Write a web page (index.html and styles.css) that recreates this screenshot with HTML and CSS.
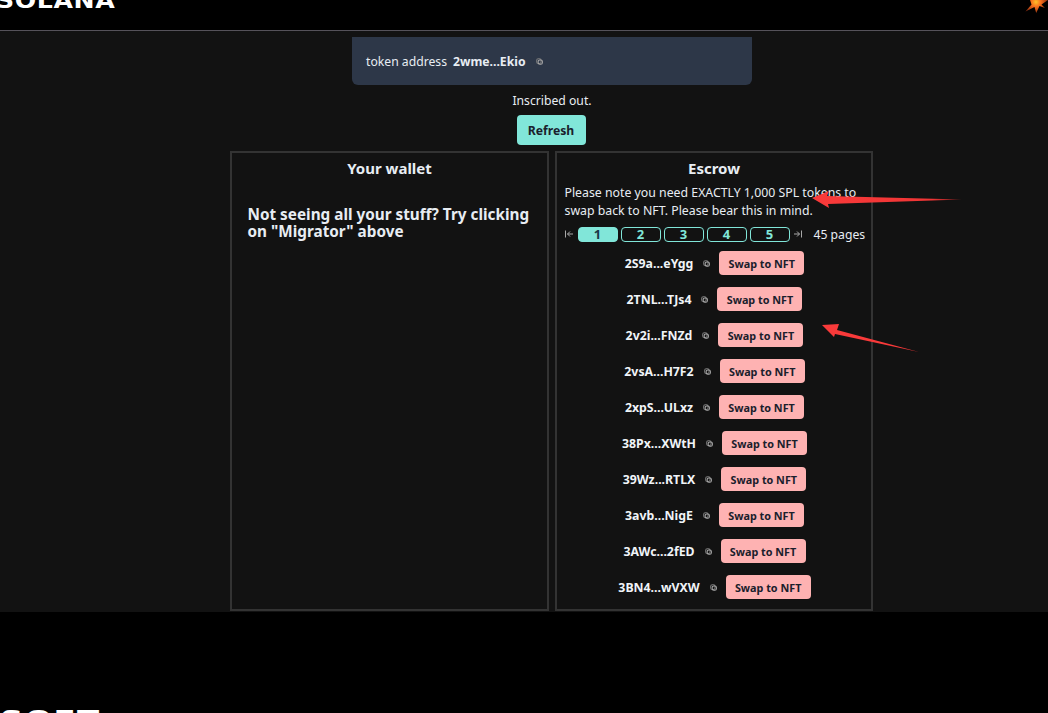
FILE: index.html
```html
<!DOCTYPE html>
<html lang="en">
<head>
  <meta charset="UTF-8" />
  <meta name="viewport" content="width=device-width, initial-scale=1.0" />
  <title>Inscriptions</title>
  <link rel="stylesheet" href="styles.css">
</head>
<body>
  <header class="topbar">
    <div class="logo">SOLANA</div>
    <svg class="spark" width="24" height="14" viewBox="0 0 24 14">
      <defs>
        <radialGradient id="sparkFill" gradientUnits="userSpaceOnUse" cx="12" cy="2" r="12">
          <stop offset="0" stop-color="#ffc02a" />
          <stop offset="0.4" stop-color="#f8701c" />
          <stop offset="1" stop-color="#8a2c10" />
        </radialGradient>
      </defs>
      <path fill="url(#sparkFill)" d="M6 0L18 0 24 0 17.500 4.500 21 8 15.500 6 12.200 13 10.500 7 1.500 11.500 7.500 4.500Z" />
    </svg>
  </header>

  <main class="page">
    <div class="token-card">
      <span>token address</span>
      <b class="addr">2wme...Ekio</b>
      <svg class="copy" viewBox="0 0 8 8"><use href="#copy-icon" /></svg>
    </div>
    <p class="status">Inscribed out.</p>
    <button class="refresh">Refresh</button>

    <div class="panels">
      <section class="panel">
        <h2>Your wallet</h2>
        <p class="hint">Not seeing all your stuff? Try clicking on "Migrator" above</p>
      </section>

      <section class="panel">
        <h2>Escrow</h2>
        <p class="note">Please note you need EXACTLY 1,000 SPL tokens to swap back to NFT. Please bear this in mind.</p>
        <div class="pager">
          <svg class="jump" viewBox="0 0 10 10"><path d="M1.500 1.500V8.500M9 5H3.500M6 2.500L3.500 5 6 7.500" /></svg>
          <button class="page-btn active">1</button>
          <button class="page-btn">2</button>
          <button class="page-btn">3</button>
          <button class="page-btn">4</button>
          <button class="page-btn">5</button>
          <svg class="jump" viewBox="0 0 10 10"><path d="M8.500 1.500V8.500M1 5H6.500M4 2.500L6.500 5 4 7.500" /></svg>
          <span class="pages">45 pages</span>
        </div>
        <ul class="rows">
          <li><b>2S9a...eYgg</b><svg class="copy" viewBox="0 0 8 8"><use href="#copy-icon" /></svg><button class="swap">Swap to NFT</button></li>
          <li><b>2TNL...TJs4</b><svg class="copy" viewBox="0 0 8 8"><use href="#copy-icon" /></svg><button class="swap">Swap to NFT</button></li>
          <li><b>2v2i...FNZd</b><svg class="copy" viewBox="0 0 8 8"><use href="#copy-icon" /></svg><button class="swap">Swap to NFT</button></li>
          <li><b>2vsA...H7F2</b><svg class="copy" viewBox="0 0 8 8"><use href="#copy-icon" /></svg><button class="swap">Swap to NFT</button></li>
          <li><b>2xpS...ULxz</b><svg class="copy" viewBox="0 0 8 8"><use href="#copy-icon" /></svg><button class="swap">Swap to NFT</button></li>
          <li><b>38Px...XWtH</b><svg class="copy" viewBox="0 0 8 8"><use href="#copy-icon" /></svg><button class="swap">Swap to NFT</button></li>
          <li><b>39Wz...RTLX</b><svg class="copy" viewBox="0 0 8 8"><use href="#copy-icon" /></svg><button class="swap">Swap to NFT</button></li>
          <li><b>3avb...NigE</b><svg class="copy" viewBox="0 0 8 8"><use href="#copy-icon" /></svg><button class="swap">Swap to NFT</button></li>
          <li><b>3AWc...2fED</b><svg class="copy" viewBox="0 0 8 8"><use href="#copy-icon" /></svg><button class="swap">Swap to NFT</button></li>
          <li><b>3BN4...wVXW</b><svg class="copy" viewBox="0 0 8 8"><use href="#copy-icon" /></svg><button class="swap">Swap to NFT</button></li>
        </ul>
      </section>
    </div>
  </main>

  <footer class="bottom">
    <div class="bottom-logo">SOFT</div>
  </footer>

  <!-- annotation arrows drawn over the screenshot -->
  <svg class="arrows" width="1048" height="713" viewBox="0 0 1048 713">
    <defs>
      <linearGradient id="fadeA" x1="812" y1="0" x2="962" y2="0" gradientUnits="userSpaceOnUse">
        <stop offset="0" stop-color="#f93a3a" />
        <stop offset="0.8" stop-color="#f03535" />
        <stop offset="1" stop-color="#701c1c" />
      </linearGradient>
    </defs>
    <path fill="url(#fadeA)" d="M812 198L829 191 827 196 962 199.500 828 204 829 208Z" />
    <path fill="#f93a3a" d="M822 325L839 324 837 330 919 352 835 334 834 337Z" />
  </svg>

  <svg class="defs" width="0" height="0">
    <symbol id="copy-icon" viewBox="0 0 8 8">
      <rect x="0.800" y="0.800" width="5" height="5.500" rx="1.800" fill="none" stroke="#7c7c7c" stroke-width="1.200" />
      <rect x="2.500" y="2.200" width="4.800" height="5" rx="1.800" fill="none" stroke="#a8a8a8" stroke-width="1.200" />
    </symbol>
  </svg>
</body>
</html>
```

FILE: styles.css
```css
* {
  box-sizing: border-box;
}

body {
  margin: 0;
  height: 713px;
  overflow: hidden;
  background: #000;
  color: #e8edf3;
  font-family: "Noto Sans", Arial, sans-serif;
  font-size: 12.200px;
}

button {
  font-family: inherit;
  cursor: pointer;
  border: none;
}

.topbar {
  height: 31px;
  background: #000;
  border-bottom: 1px solid #55525a;
  display: flex;
  justify-content: space-between;
  overflow: hidden;
}

.logo {
  margin-top: -9px;
  margin-left: -4px;
  height: 20px;
  font-family: "DejaVu Sans", sans-serif;
  font-size: 21px;
  line-height: 20px;
  font-weight: 700;
  letter-spacing: 0.5px;
  color: #fff;
  transform: scaleX(1.2);
  transform-origin: left;
}

.page {
  height: 581px;
  background: #121212;
  display: flex;
  flex-direction: column;
  align-items: center;
  padding: 6px 0 0 56px;
}

.token-card {
  width: 400px;
  height: 48px;
  background: #2d3748;
  border-radius: 0 0 6px 6px;
  display: flex;
  align-items: center;
  padding: 0 14px;
  gap: 6px;
}

.addr {
  font-weight: 700;
}

.token-card .copy {
  margin-left: 4px;
}

.copy {
  width: 7px;
  height: 7px;
  flex: none;
}

.status {
  margin: 7px 0 0;
  height: 18px;
  line-height: 18px;
  text-align: center;
}

.refresh {
  margin: 5px 2px 0 0;
  width: 69px;
  height: 30px;
  border-radius: 4px;
  background: #81e6d9;
  color: #1a202c;
  font-size: 12.200px;
  font-weight: 700;
}

.panels {
  margin: 6px 2px 0 0;
  display: flex;
  gap: 6px;
}

.panel {
  width: 319px;
  height: 460px;
  border: 2px solid #333;
  padding: 0 6px 0 7px;
  overflow: hidden;
}

.panel + .panel {
  width: 318px;
}

.panel h2 {
  margin: 5px 0 0;
  font-size: 15px;
  line-height: 20px;
  font-weight: 700;
  text-align: center;
}

.hint {
  margin: 28px 0 0 9px;
  font-size: 15.300px;
  line-height: 17px;
  font-weight: 700;
}

.note {
  margin: 6px 0 0 1px;
  font-size: 12.300px;
  line-height: 17.600px;
}

.pager {
  margin-top: 5px;
  height: 20px;
  display: flex;
  align-items: center;
  gap: 3px;
}

.jump {
  width: 10px;
  height: 10px;
  flex: none;
  margin-right: 1px;
  fill: none;
  stroke: #a8a8a8;
  stroke-width: 1;
}

.page-btn {
  flex: none;
  width: 40px;
  height: 15px;
  padding: 0;
  background: transparent;
  border: 1px solid #81e6d9;
  border-radius: 4px;
  color: #81e6d9;
  font-size: 13px;
  font-weight: 700;
  line-height: 13px;
}

.page-btn.active {
  background: #81e6d9;
  color: #1a3a48;
}

.pages {
  flex: none;
  margin-left: 7px;
  white-space: nowrap;
}

.rows {
  list-style: none;
  margin: 1px 0 0;
  padding: 0 0 0 1px;
}

.rows li {
  height: 36px;
  display: flex;
  align-items: center;
  justify-content: center;
  font-size: 12.300px;
}

.rows b {
  font-weight: 700;
  color: #f0f4f8;
}

.rows .copy {
  margin: 0 9px 0 10px;
}

.swap {
  width: 85px;
  height: 24px;
  padding: 0;
  border-radius: 4px;
  background: #feb2b2;
  color: #1a202c;
  font-size: 10.800px;
  font-weight: 700;
}

.bottom {
  height: 101px;
  background: #000;
  overflow: hidden;
}

.bottom-logo {
  margin-top: 96px;
  font-family: "DejaVu Sans", sans-serif;
  font-size: 24px;
  line-height: 24px;
  font-weight: 700;
  color: #fff;
  letter-spacing: 1px;
  transform: scaleX(1.35);
  transform-origin: left;
}

.arrows {
  position: absolute;
  top: 0;
  left: 0;
  pointer-events: none;
}

.defs {
  position: absolute;
}
```
